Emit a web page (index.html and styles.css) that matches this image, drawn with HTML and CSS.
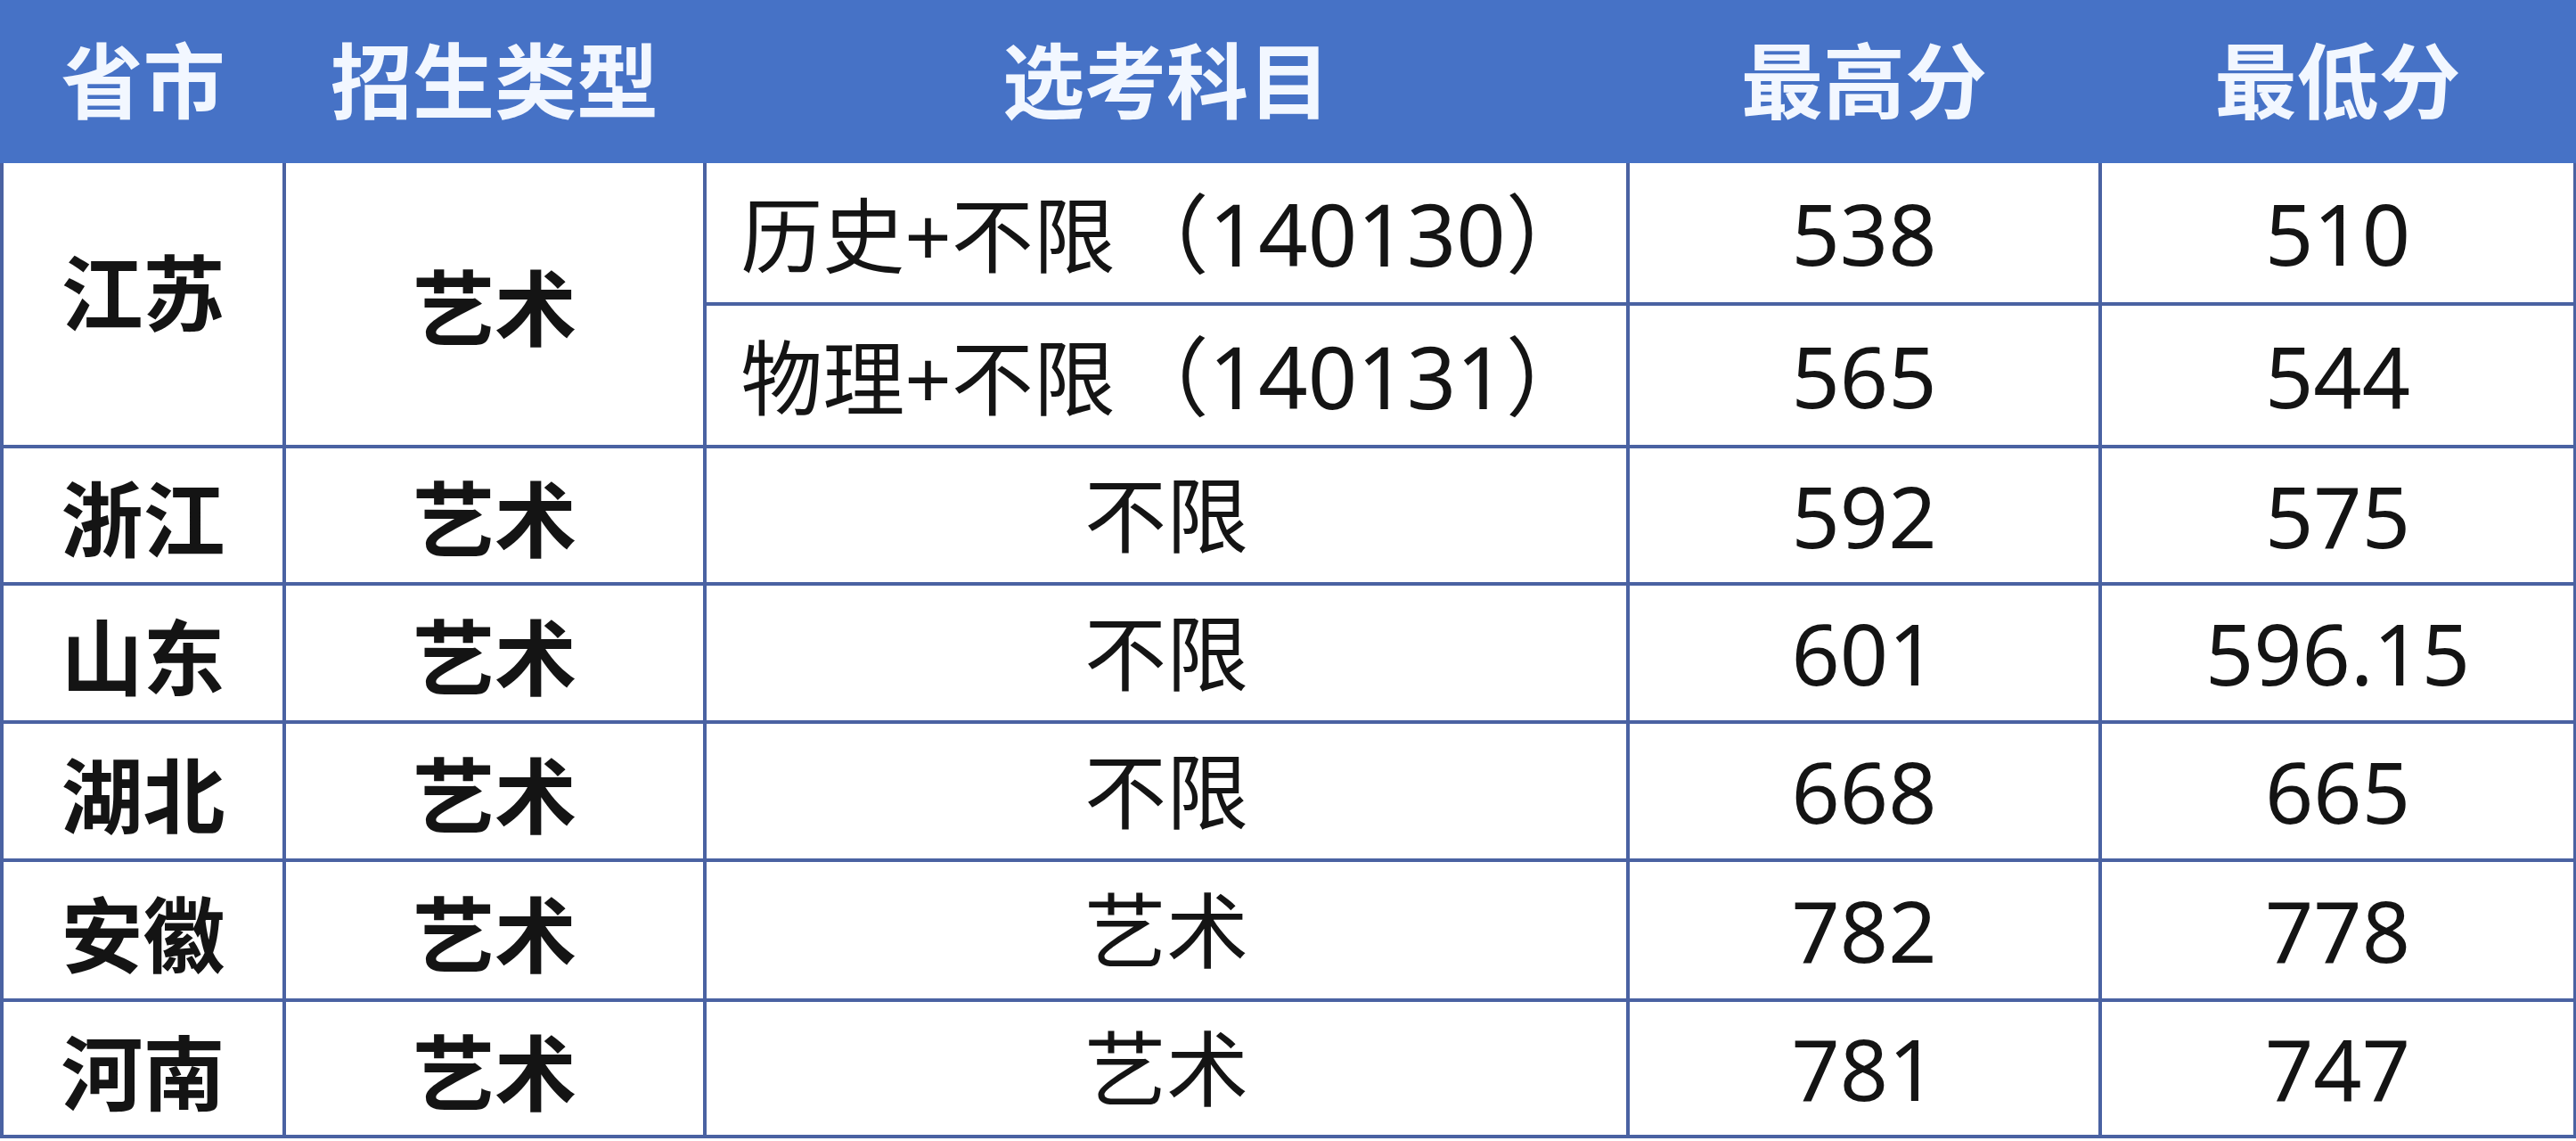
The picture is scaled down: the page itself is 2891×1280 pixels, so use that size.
FILE: index.html
```html
<!DOCTYPE html>
<html lang="zh-CN">
<head>
<meta charset="utf-8">
<title>分数表</title>
<link rel="stylesheet" href="styles.css">
</head>
<body>
<table class="scores">
  <colgroup>
    <col class="c1"><col class="c2"><col class="c3"><col class="c4"><col class="c5">
  </colgroup>
  <thead>
    <tr class="head">
      <th>省市</th><th>招生类型</th><th>选考科目</th><th>最高分</th><th>最低分</th>
    </tr>
  </thead>
  <tbody>
    <tr class="r1">
      <td class="prov raised" rowspan="2">江苏</td>
      <td class="type" rowspan="2">艺术</td>
      <td class="subj">历史+不限<span class="code">（140130）</span></td>
      <td class="num">538</td><td class="num">510</td>
    </tr>
    <tr class="r2">
      <td class="subj">物理+不限<span class="code">（140131）</span></td>
      <td class="num">565</td><td class="num">544</td>
    </tr>
    <tr class="r3">
      <td class="prov">浙江</td><td class="type">艺术</td><td class="subj">不限</td>
      <td class="num">592</td><td class="num">575</td>
    </tr>
    <tr class="r4">
      <td class="prov">山东</td><td class="type">艺术</td><td class="subj">不限</td>
      <td class="num">601</td><td class="num">596.15</td>
    </tr>
    <tr class="r5">
      <td class="prov">湖北</td><td class="type">艺术</td><td class="subj">不限</td>
      <td class="num">668</td><td class="num">665</td>
    </tr>
    <tr class="r6">
      <td class="prov">安徽</td><td class="type">艺术</td><td class="subj">艺术</td>
      <td class="num">782</td><td class="num">778</td>
    </tr>
    <tr class="r7">
      <td class="prov">河南</td><td class="type">艺术</td><td class="subj">艺术</td>
      <td class="num">781</td><td class="num">747</td>
    </tr>
  </tbody>
</table>
</body>
</html>
```
FILE: styles.css
```css
html, body {
  margin: 0;
  padding: 0;
  background: #ffffff;
}

.scores {
  border-collapse: collapse;
  table-layout: fixed;
  width: 2888px;
  font-family: "Noto Sans", "Noto Sans CJK SC", sans-serif;
  font-size: 92px;
  color: #141414;
}

.c1 { width: 317px; }
.c2 { width: 472px; }
.c3 { width: 1036px; }
.c4 { width: 530px; }
.c5 { width: 533px; }

.head th {
  height: 163px;
  padding: 0 0 12px 0;
  background: #4672c6;
  color: #f2f7ff;
  font-family: "Noto Sans CJK SC", sans-serif;
  font-weight: 700;
  text-align: center;
  vertical-align: middle;
  border: 4px solid #4672c6;
  line-height: 1;
}

.scores td {
  padding: 0;
  text-align: center;
  vertical-align: middle;
  border: 4px solid #4a62a2;
  line-height: 1;
}

.prov, .type {
  font-family: "Noto Sans CJK SC", sans-serif;
  font-weight: 700;
}

.scores td.raised {
  padding-bottom: 34px;
}

.subj {
  font-family: "Noto Sans", "Noto Sans CJK SC", sans-serif;
  font-weight: 400;
}

.code {
  font-size: 97px;
  margin-left: 8px;
}

.num {
  font-weight: 400;
  font-size: 95px;
}

.r1 td, .r2 td { height: 156px; }
.r3 td { height: 150px; }
.r4 td { height: 151px; }
.r5 td { height: 151px; }
.r6 td { height: 153px; }
.r7 td { height: 149px; }
```
